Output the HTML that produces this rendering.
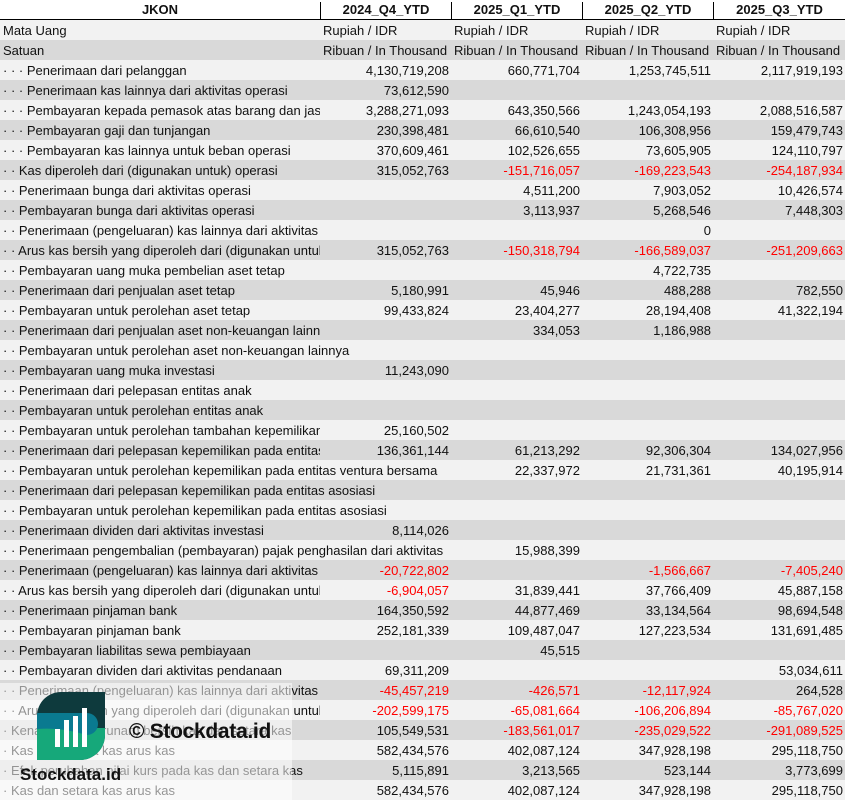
<!DOCTYPE html>
<html><head><meta charset="utf-8"><style>
*{margin:0;padding:0;box-sizing:border-box}
body{width:845px;height:801px;overflow:hidden;background:#fff;font-family:"Liberation Sans",sans-serif;font-size:13px;color:#111;position:relative}
.r{position:absolute;left:0;width:845px;height:20px;line-height:21px;white-space:nowrap}
.r:nth-child(odd){background:#f2f2f2}
.r:nth-child(even){background:#d9d9d9}
.c{position:absolute;top:0;height:20px;overflow:hidden}
.l{left:3px;width:317px}
.n{text-align:right;padding-right:2px}
.a{left:320px;width:131px}.b{left:451px;width:131px}.d{left:582px;width:131px}.e{left:713px;width:132px}
.t{text-align:left;padding-left:3px;padding-right:0}
.red{color:#f00}
.hdr{position:absolute;top:0;left:0;width:845px;height:21px;border-bottom:2px solid #000;background:#fff;font-weight:bold;line-height:20px}
.hdr div{position:absolute;top:2px;height:17px;line-height:16px;text-align:center;border-left:1px solid #000}
</style></head><body>
<div class="hdr">
<div style="left:0;width:320px;border-left:none">JKON</div>
<div style="left:320px;width:131px">2024_Q4_YTD</div>
<div style="left:451px;width:131px">2025_Q1_YTD</div>
<div style="left:582px;width:131px">2025_Q2_YTD</div>
<div style="left:713px;width:132px">2025_Q3_YTD</div>
</div>
<div id="rows" style="position:absolute;top:20px;left:0">
<div class="r" style="top:0"><div class="c l">Mata Uang</div><div class="c a n t">Rupiah / IDR</div><div class="c b n t">Rupiah / IDR</div><div class="c d n t">Rupiah / IDR</div><div class="c e n t">Rupiah / IDR</div></div>
<div class="r" style="top:20px"><div class="c l">Satuan</div><div class="c a n t">Ribuan / In Thousand</div><div class="c b n t">Ribuan / In Thousand</div><div class="c d n t">Ribuan / In Thousand</div><div class="c e n t">Ribuan / In Thousand</div></div>
<div class="r" style="top:40px"><div class="c l">· · · Penerimaan dari pelanggan</div><div class="c a n">4,130,719,208</div><div class="c b n">660,771,704</div><div class="c d n">1,253,745,511</div><div class="c e n">2,117,919,193</div></div>
<div class="r" style="top:60px"><div class="c l">· · · Penerimaan kas lainnya dari aktivitas operasi</div><div class="c a n">73,612,590</div></div>
<div class="r" style="top:80px"><div class="c l">· · · Pembayaran kepada pemasok atas barang dan jasa</div><div class="c a n">3,288,271,093</div><div class="c b n">643,350,566</div><div class="c d n">1,243,054,193</div><div class="c e n">2,088,516,587</div></div>
<div class="r" style="top:100px"><div class="c l">· · · Pembayaran gaji dan tunjangan</div><div class="c a n">230,398,481</div><div class="c b n">66,610,540</div><div class="c d n">106,308,956</div><div class="c e n">159,479,743</div></div>
<div class="r" style="top:120px"><div class="c l">· · · Pembayaran kas lainnya untuk beban operasi</div><div class="c a n">370,609,461</div><div class="c b n">102,526,655</div><div class="c d n">73,605,905</div><div class="c e n">124,110,797</div></div>
<div class="r" style="top:140px"><div class="c l">· · Kas diperoleh dari (digunakan untuk) operasi</div><div class="c a n">315,052,763</div><div class="c b n red">-151,716,057</div><div class="c d n red">-169,223,543</div><div class="c e n red">-254,187,934</div></div>
<div class="r" style="top:160px"><div class="c l">· · Penerimaan bunga dari aktivitas operasi</div><div class="c b n">4,511,200</div><div class="c d n">7,903,052</div><div class="c e n">10,426,574</div></div>
<div class="r" style="top:180px"><div class="c l">· · Pembayaran bunga dari aktivitas operasi</div><div class="c b n">3,113,937</div><div class="c d n">5,268,546</div><div class="c e n">7,448,303</div></div>
<div class="r" style="top:200px"><div class="c l">· · Penerimaan (pengeluaran) kas lainnya dari aktivitas operasi</div><div class="c d n">0</div></div>
<div class="r" style="top:220px"><div class="c l">· · Arus kas bersih yang diperoleh dari (digunakan untuk)</div><div class="c a n">315,052,763</div><div class="c b n red">-150,318,794</div><div class="c d n red">-166,589,037</div><div class="c e n red">-251,209,663</div></div>
<div class="r" style="top:240px"><div class="c l">· · Pembayaran uang muka pembelian aset tetap</div><div class="c d n">4,722,735</div></div>
<div class="r" style="top:260px"><div class="c l">· · Penerimaan dari penjualan aset tetap</div><div class="c a n">5,180,991</div><div class="c b n">45,946</div><div class="c d n">488,288</div><div class="c e n">782,550</div></div>
<div class="r" style="top:280px"><div class="c l">· · Pembayaran untuk perolehan aset tetap</div><div class="c a n">99,433,824</div><div class="c b n">23,404,277</div><div class="c d n">28,194,408</div><div class="c e n">41,322,194</div></div>
<div class="r" style="top:300px"><div class="c l">· · Penerimaan dari penjualan aset non-keuangan lainnya</div><div class="c b n">334,053</div><div class="c d n">1,186,988</div></div>
<div class="r" style="top:320px"><div class="c l" style="width:448px">· · Pembayaran untuk perolehan aset non-keuangan lainnya</div></div>
<div class="r" style="top:340px"><div class="c l">· · Pembayaran uang muka investasi</div><div class="c a n">11,243,090</div></div>
<div class="r" style="top:360px"><div class="c l">· · Penerimaan dari pelepasan entitas anak</div></div>
<div class="r" style="top:380px"><div class="c l">· · Pembayaran untuk perolehan entitas anak</div></div>
<div class="r" style="top:400px"><div class="c l">· · Pembayaran untuk perolehan tambahan kepemilikan</div><div class="c a n">25,160,502</div></div>
<div class="r" style="top:420px"><div class="c l">· · Penerimaan dari pelepasan kepemilikan pada entitas</div><div class="c a n">136,361,144</div><div class="c b n">61,213,292</div><div class="c d n">92,306,304</div><div class="c e n">134,027,956</div></div>
<div class="r" style="top:440px"><div class="c l" style="width:448px">· · Pembayaran untuk perolehan kepemilikan pada entitas ventura bersama</div><div class="c b n">22,337,972</div><div class="c d n">21,731,361</div><div class="c e n">40,195,914</div></div>
<div class="r" style="top:460px"><div class="c l" style="width:448px">· · Penerimaan dari pelepasan kepemilikan pada entitas asosiasi</div></div>
<div class="r" style="top:480px"><div class="c l" style="width:448px">· · Pembayaran untuk perolehan kepemilikan pada entitas asosiasi</div></div>
<div class="r" style="top:500px"><div class="c l">· · Penerimaan dividen dari aktivitas investasi</div><div class="c a n">8,114,026</div></div>
<div class="r" style="top:520px"><div class="c l" style="width:448px">· · Penerimaan pengembalian (pembayaran) pajak penghasilan dari aktivitas</div><div class="c b n">15,988,399</div></div>
<div class="r" style="top:540px"><div class="c l">· · Penerimaan (pengeluaran) kas lainnya dari aktivitas</div><div class="c a n red">-20,722,802</div><div class="c d n red">-1,566,667</div><div class="c e n red">-7,405,240</div></div>
<div class="r" style="top:560px"><div class="c l">· · Arus kas bersih yang diperoleh dari (digunakan untuk)</div><div class="c a n red">-6,904,057</div><div class="c b n">31,839,441</div><div class="c d n">37,766,409</div><div class="c e n">45,887,158</div></div>
<div class="r" style="top:580px"><div class="c l">· · Penerimaan pinjaman bank</div><div class="c a n">164,350,592</div><div class="c b n">44,877,469</div><div class="c d n">33,134,564</div><div class="c e n">98,694,548</div></div>
<div class="r" style="top:600px"><div class="c l">· · Pembayaran pinjaman bank</div><div class="c a n">252,181,339</div><div class="c b n">109,487,047</div><div class="c d n">127,223,534</div><div class="c e n">131,691,485</div></div>
<div class="r" style="top:620px"><div class="c l">· · Pembayaran liabilitas sewa pembiayaan</div><div class="c b n">45,515</div></div>
<div class="r" style="top:640px"><div class="c l">· · Pembayaran dividen dari aktivitas pendanaan</div><div class="c a n">69,311,209</div><div class="c e n">53,034,611</div></div>
<div class="r" style="top:660px"><div class="c l">· · Penerimaan (pengeluaran) kas lainnya dari aktivitas</div><div class="c a n red">-45,457,219</div><div class="c b n red">-426,571</div><div class="c d n red">-12,117,924</div><div class="c e n">264,528</div></div>
<div class="r" style="top:680px"><div class="c l">· · Arus kas bersih yang diperoleh dari (digunakan untuk)</div><div class="c a n red">-202,599,175</div><div class="c b n red">-65,081,664</div><div class="c d n red">-106,206,894</div><div class="c e n red">-85,767,020</div></div>
<div class="r" style="top:700px"><div class="c l">· Kenaikan (penurunan) bersih kas dan setara kas</div><div class="c a n">105,549,531</div><div class="c b n red">-183,561,017</div><div class="c d n red">-235,029,522</div><div class="c e n red">-291,089,525</div></div>
<div class="r" style="top:720px"><div class="c l">· Kas dan setara kas arus kas</div><div class="c a n">582,434,576</div><div class="c b n">402,087,124</div><div class="c d n">347,928,198</div><div class="c e n">295,118,750</div></div>
<div class="r" style="top:740px"><div class="c l">· Efek perubahan nilai kurs pada kas dan setara kas</div><div class="c a n">5,115,891</div><div class="c b n">3,213,565</div><div class="c d n">523,144</div><div class="c e n">3,773,699</div></div>
<div class="r" style="top:760px"><div class="c l">· Kas dan setara kas arus kas</div><div class="c a n">582,434,576</div><div class="c b n">402,087,124</div><div class="c d n">347,928,198</div><div class="c e n">295,118,750</div></div>
</div>
<div style="position:absolute;left:0;top:683px;width:292px;height:118px;background:rgba(255,255,255,0.55)"></div>
<svg style="position:absolute;left:37px;top:692px" width="68" height="68" viewBox="0 0 68 68">
<defs><clipPath id="k"><path d="M24 0H68V43A25 25 0 0 1 43 68H0V24A24 24 0 0 1 24 0Z"/></clipPath></defs>
<g clip-path="url(#k)">
<rect width="68" height="68" fill="#0e3a3d"/>
<rect y="36" width="68" height="32" fill="#16a87a"/>
<path d="M0 21H50A11 11 0 0 1 50 43Q25 35 0 37Z" fill="#0a7a90"/>
</g>
<g fill="#fff"><rect x="18" y="37" width="5" height="18"/><rect x="27" y="28" width="5" height="27"/><rect x="36" y="24" width="5" height="31"/><rect x="45" y="16" width="5" height="39"/></g>
</svg>
<div style="position:absolute;left:129px;top:717px;font-size:21px;font-weight:bold;color:#111;line-height:30px;letter-spacing:-0.3px">© Stockdata.id</div>
<div style="position:absolute;left:20px;top:764px;font-size:17px;font-weight:bold;color:#111;line-height:22px">Stockdata.id</div>
</body></html>
